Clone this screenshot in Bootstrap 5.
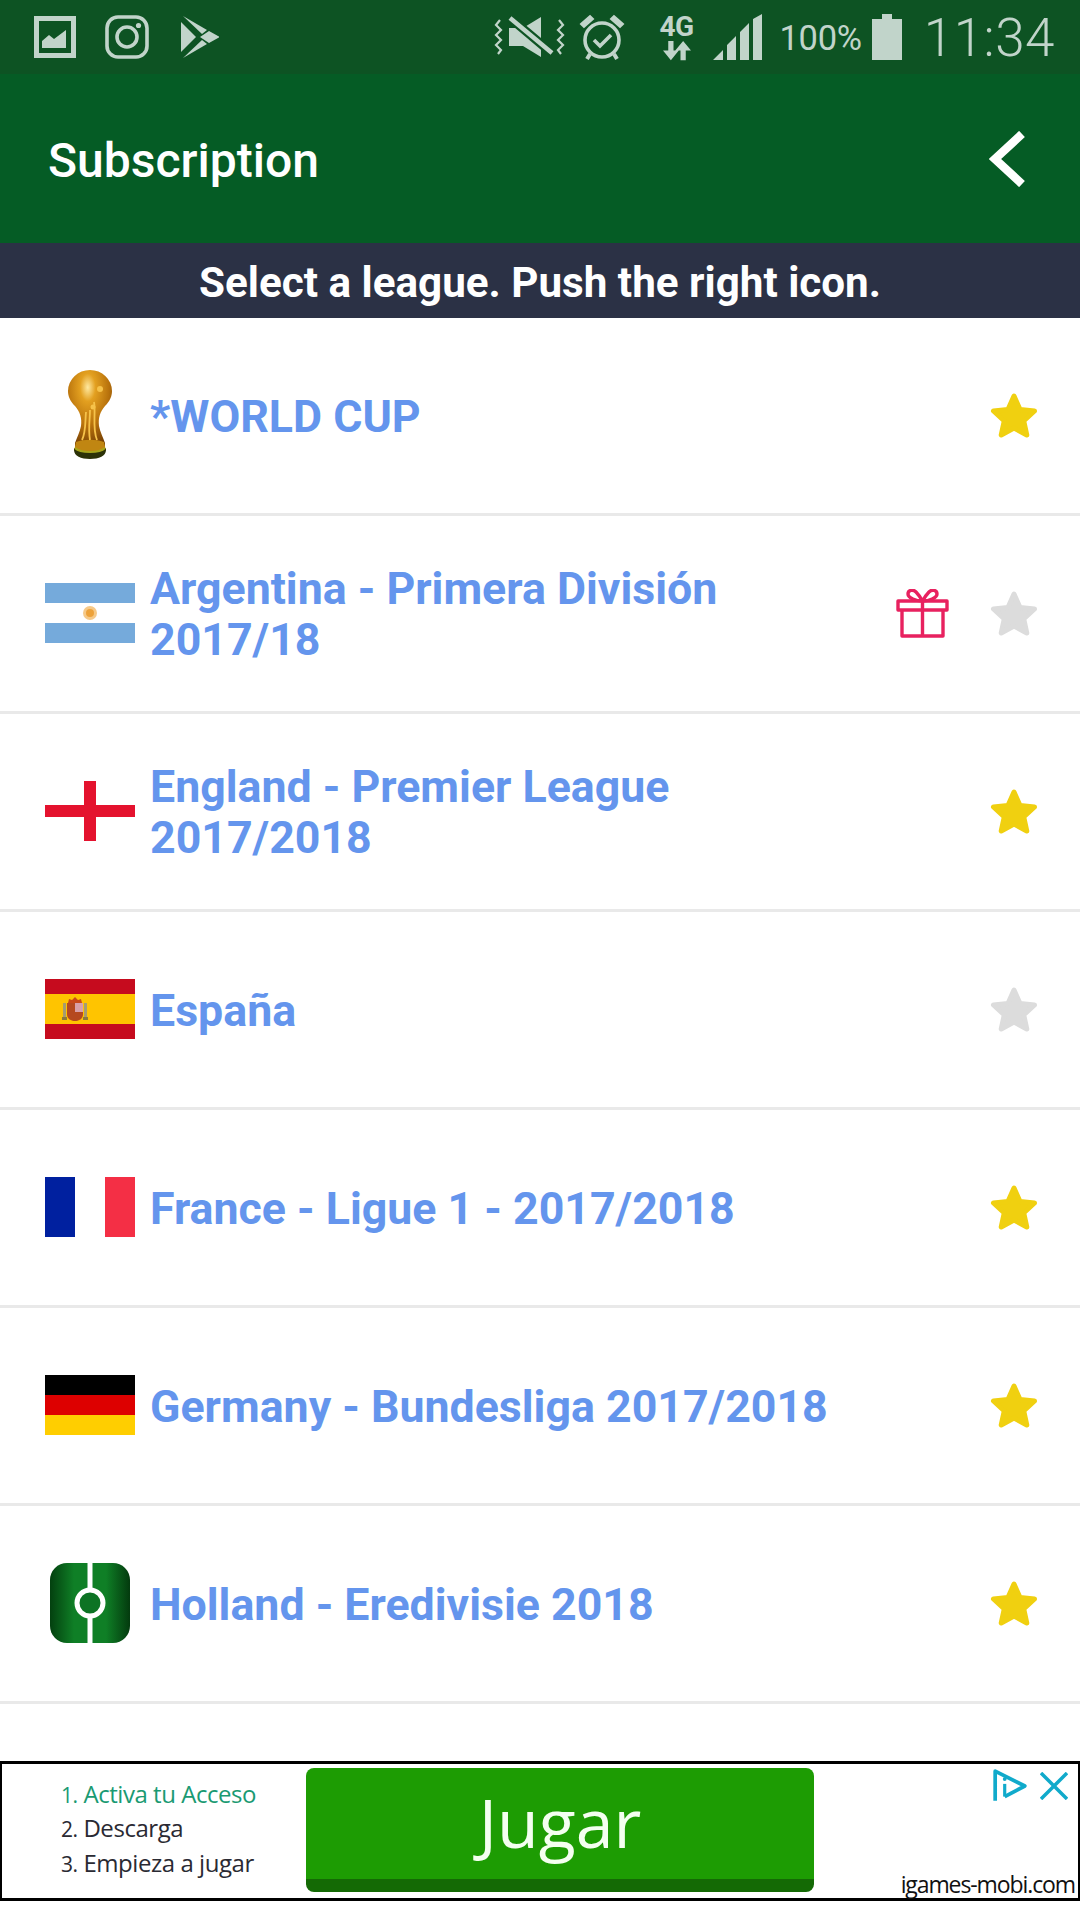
<!DOCTYPE html>
<html lang="en">
<head>
    <meta charset="UTF-8">
    <meta name="viewport" content="width=device-width, initial-scale=1.0">
    <title>Subscription</title>
    <link href="https://cdn.jsdelivr.net/npm/bootstrap@5.3.0/dist/css/bootstrap.min.css" rel="stylesheet">
    <style>
        body { font-family: Roboto, sans-serif; background: #fff; width: 1080px; height: 1920px; overflow: hidden; }
        svg { display: block; flex-shrink: 0; }

        .status-strip { height: 74px; background: #0d5323; color: #c1d4ca; padding-left: 34px; }
        .ic-insta { margin-left: 29px; }
        .ic-play { margin-left: 31px; }
        .ic-vibrate { margin-left: auto; }
        .ic-alarm { margin-left: 14px; }
        .ic-net { margin-left: 32px; width: 40px; }
        .net-label { font-family: "Liberation Sans Narrow", Roboto, sans-serif; font-size: 28px; font-weight: 700; line-height: 26px; letter-spacing: -.5px; }
        .ic-signal { margin-left: 16px; }
        .batt-pct { margin-left: 18px; font-size: 34.5px; font-weight: 400; line-height: 1; letter-spacing: -.3px; padding-top: 2px; }
        .ic-batt { margin-left: 10px; }
        .clock { margin-left: 22px; margin-right: 25px; font-size: 53px; font-weight: 300; line-height: 1; letter-spacing: .5px; padding-top: 3px; }

        .app-head { height: 169px; background: #055c25; padding: 0 54px 0 48px; }
        .app-title { font-size: 48px; font-weight: 500; color: #fff; margin: 4px 0 0; }

        .hint-bar { height: 75px; padding-top: 4px; background: #2b3145; color: #fff; font-size: 42.2px; font-weight: 700; }

        .list-group-flush .league-row.list-group-item { height: 198px; padding: 0 42px 0 45px; border-width: 0 0 3px; border-color: #e9e9e9; border-style: solid; }
        .flag-box { width: 90px; height: 60px; margin-bottom: 2px; }
        .league-name { margin-left: 15px; padding-top: 3px; font-size: 44.7px; line-height: 51px; font-weight: 700; color: #6495ed; }
        .ic-gift { margin-right: 41px; }

        .ad-box { margin-top: 57px; height: 140px; border: 3px solid #000; background: #fff; border-left-width: 2px; border-right-width: 2px; }
        .ad-steps { width: 304px; padding: 0 0 5px 59px; font-family: "Open Sans", sans-serif; font-size: 24px; font-weight: 500; letter-spacing: -.45px; color: #2a2a33; }
        .ad-step { height: 34.5px; line-height: 34.5px; }
        .ad-num { font-size: 21px; line-height: 1; }
        .ad-first { color: #1a9a72; }
        .ad-btn { width: 508px; height: 124px; margin-top: 4px; padding-bottom: 4px; background: #1d9c03; border-bottom: 13px solid #146a05; border-radius: 8px; color: #f4fff0; font-family: "Open Sans", sans-serif; font-size: 68px; line-height: 1; }
        .ad-side { padding: 4px 3px 0 0; }
        .ad-marks { gap: 12px; margin-right: 7px; }
        .ad-url { font-family: "Open Sans", sans-serif; font-size: 23px; line-height: 1; letter-spacing: -1.1px; color: #111; margin-bottom: 2px; white-space: nowrap; }
    </style>
</head>
<body>
    <div class="status-strip d-flex align-items-center">
        <svg width="42" height="42" viewBox="0 0 42 42"><rect x="2.5" y="2.5" width="37" height="37" fill="none" stroke="#c1d4ca" stroke-width="5"/><path d="M8 32V25l7-6 5 4 12-9v18z" fill="#c1d4ca"/></svg>
        <svg class="ic-insta" width="44" height="44" viewBox="0 0 44 44" fill="none" stroke="#c1d4ca" stroke-width="3.6"><rect x="2" y="2" width="40" height="40" rx="11"/><circle cx="22" cy="22" r="10"/><circle cx="33.5" cy="10.5" r="2.6" fill="#c1d4ca" stroke="none"/></svg>
        <svg class="ic-play" width="40" height="44" viewBox="0 0 40 44" fill="#c1d4ca"><path d="M1 7v30l15-15z"/><path d="M3 1l19 18 5-4z"/><path d="M3 43l19-18 5 4z"/><path d="M20 22l9-6 9 5a1 1 0 0 1 0 2l-9 5z"/></svg>

        <svg class="ic-vibrate" width="71" height="42" viewBox="0 0 71 42" fill="none" stroke="#c1d4ca"><path d="M6 4l-4 5 5 5-5 5 5 5-5 5 5 5-3 4M65 4l4 5-5 5 5 5-5 5 5 5-5 5 3 4" stroke-width="2.200"/><path d="M15 12h14L47 1v40L29 30H15z" fill="#c1d4ca" stroke="none"/><path d="M15 1l44 37" stroke="#0d5323" stroke-width="9"/><path d="M16 2l42 35" stroke-width="4.500"/></svg>
        <svg class="ic-alarm" width="46" height="47" viewBox="0 0 46 47" fill="none" stroke="#c1d4ca"><circle cx="23" cy="26" r="17" stroke-width="3.600"/><path d="M15 26l6 6 11-11" stroke-width="3.600"/><path d="M2 10l9-8 3 3-9 8zM44 10l-9-8-3 3 9 8z" fill="#c1d4ca" stroke-width="2"/><path d="M11 40l-3 5M35 40l3 5" stroke-width="4"/></svg>
        <div class="ic-net d-flex flex-column align-items-center">
            <span class="net-label">4G</span>
            <svg width="28" height="21" viewBox="0 0 32 22" fill="#c1d4ca"><path d="M6 0h6v11h6L9 22 0 11h6zM20 22h6V11h6L23 0l-9 11h6z"/></svg>
        </div>
        <svg class="ic-signal" width="49" height="46" viewBox="0 0 49 46" fill="#c1d4ca"><path d="M0 46l10-10v10zM14 46V31l9-9v24zM27 46V18l9-9v37zM40 46V5l9-5v46z"/></svg>
        <span class="batt-pct">100%</span>
        <svg class="ic-batt" width="30" height="46" viewBox="0 0 30 46" fill="#c1d4ca"><path d="M0 5h10V0h10v5h10v41H0z"/></svg>
        <span class="clock">11:34</span>
    </div>

    <div class="app-head d-flex align-items-center justify-content-between">
        <h1 class="app-title">Subscription</h1>
        <svg width="37" height="56" viewBox="0 0 37 56" fill="none" stroke="#fff" stroke-width="8.500"><path d="M33 3L6 28l27 25"/></svg>
    </div>

    <div class="hint-bar d-flex align-items-center justify-content-center">Select a league. Push the right icon.</div>

    <svg width="0" height="0" class="position-absolute">
        <defs>
            <symbol id="star" viewBox="0 0 48 48"><path d="M24 4l6 13.500 14.500 1.500-10.800 9.800 3.100 14.200L24 36l-12.800 7 3.100-14.200L3.500 19 18 17.500z" stroke-width="5" stroke-linejoin="round"/></symbol>
            <radialGradient id="gold" cx=".45" cy=".22" r=".8"><stop offset="0" stop-color="#ffe9a0"/><stop offset=".22" stop-color="#e3a020"/><stop offset=".6" stop-color="#b8720c"/><stop offset="1" stop-color="#6e3a04"/></radialGradient>
            <linearGradient id="pitch" x1="0" x2="1" y1="0" y2="0"><stop offset="0" stop-color="#03400f"/><stop offset=".3" stop-color="#0f7f26"/><stop offset=".7" stop-color="#0f7f26"/><stop offset="1" stop-color="#033a0e"/></linearGradient>
        </defs>
    </svg>

    <div class="list-group list-group-flush rounded-0">
        <div class="league-row list-group-item d-flex align-items-center">
            <div class="flag-box d-flex align-items-center justify-content-center">
                <svg width="48" height="90" viewBox="0 0 48 90"><path d="M9 36C4 31 2 26 2 21a22 21 0 0 1 44 0c0 5-2 10-7 15-5 6-7 12-6 20 1 6 4 11 6 17v6H9v-6c2-6 5-11 6-17 1-8-1-14-6-20z" fill="url(#gold)"/><path d="M10 72c8-3 20-3 28 0l2 9H8z" fill="#c08612"/><path d="M8 80c0 6 7 9 16 9s16-3 16-9v-2c-3 3-9 4-16 4S11 81 8 78z" fill="#2c3208"/><path d="M9 78c3 3 9 4 15 4s12-1 15-4" fill="none" stroke="#a7a51c" stroke-width="2"/><path d="M20 42c-1 10 0 20-4 28M28 32c2 12-2 26 3 38M24 40c0 10-2 18 0 30" fill="none" stroke="#f6c24a" stroke-width="1.800"/><circle cx="34" cy="19" r="3" fill="#f6c24a"/><circle cx="27" cy="37" r="2.500" fill="#f6c24a"/></svg>
            </div>
            <span class="league-name flex-grow-1">*WORLD CUP</span>
            <svg width="48" height="48" fill="#f0d010" stroke="#f0d010"><use href="#star"/></svg>
        </div>

        <div class="league-row list-group-item d-flex align-items-center">
            <svg class="flag-box" viewBox="0 0 90 60"><rect width="90" height="60" fill="#fff"/><rect width="90" height="20" fill="#75aadb"/><rect y="40" width="90" height="20" fill="#75aadb"/><circle cx="45" cy="30" r="7" fill="#f6c988"/><circle cx="45" cy="30" r="4" fill="#eda23a"/></svg>
            <span class="league-name flex-grow-1">Argentina - Primera División<br>2017/18</span>
            <svg class="ic-gift" width="53" height="49" viewBox="0 0 53 49" fill="none" stroke="#e8215f" stroke-width="3.400" stroke-linejoin="round"><path d="M6 21v26h41V21M2 12h49v9H2zM26.500 12v35"/><path d="M26.500 12C20 12 12 9 12 5s5-5 8-2 6.500 9 6.500 9zM26.500 12C33 12 41 9 41 5s-5-5-8-2-6.500 9-6.500 9z"/></svg>
            <svg width="48" height="48" fill="#dcdcdc" stroke="#dcdcdc"><use href="#star"/></svg>
        </div>

        <div class="league-row list-group-item d-flex align-items-center">
            <svg class="flag-box" viewBox="0 0 90 60"><rect width="90" height="60" fill="#fff"/><rect x="39" width="12" height="60" fill="#e4122e"/><rect y="24" width="90" height="12" fill="#e4122e"/></svg>
            <span class="league-name flex-grow-1">England - Premier League<br>2017/2018</span>
            <svg width="48" height="48" fill="#f0d010" stroke="#f0d010"><use href="#star"/></svg>
        </div>

        <div class="league-row list-group-item d-flex align-items-center">
            <svg class="flag-box" viewBox="0 0 90 60"><rect width="90" height="60" fill="#c60b1e"/><rect y="15" width="90" height="30" fill="#ffc400"/><path d="M22 24h16v11c0 5-4 7-8 7s-8-2-8-7z" fill="#b5491f"/><path d="M30 24h8v9h-8z" fill="#d8a0a8"/><path d="M23 24l1-4 3 1 3-3 3 3 3-1 1 4z" fill="#c8481a"/><rect x="18" y="24" width="3" height="16" fill="#a59c70"/><rect x="39" y="24" width="3" height="16" fill="#a59c70"/><rect x="17" y="38" width="5" height="3" fill="#8c7a3a"/><rect x="38" y="38" width="5" height="3" fill="#8c7a3a"/></svg>
            <span class="league-name flex-grow-1">España</span>
            <svg width="48" height="48" fill="#dcdcdc" stroke="#dcdcdc"><use href="#star"/></svg>
        </div>

        <div class="league-row list-group-item d-flex align-items-center">
            <svg class="flag-box" viewBox="0 0 90 60"><rect width="30" height="60" fill="#00209f"/><rect x="30" width="30" height="60" fill="#fff"/><rect x="60" width="30" height="60" fill="#f42f45"/></svg>
            <span class="league-name flex-grow-1">France - Ligue 1 - 2017/2018</span>
            <svg width="48" height="48" fill="#f0d010" stroke="#f0d010"><use href="#star"/></svg>
        </div>

        <div class="league-row list-group-item d-flex align-items-center">
            <svg class="flag-box" viewBox="0 0 90 60"><rect width="90" height="20" fill="#000"/><rect y="20" width="90" height="20" fill="#dd0000"/><rect y="40" width="90" height="20" fill="#ffce00"/></svg>
            <span class="league-name flex-grow-1">Germany - Bundesliga 2017/2018</span>
            <svg width="48" height="48" fill="#f0d010" stroke="#f0d010"><use href="#star"/></svg>
        </div>

        <div class="league-row list-group-item d-flex align-items-center">
            <div class="flag-box d-flex align-items-center justify-content-center">
                <svg width="80" height="80" viewBox="0 0 80 80"><rect width="80" height="80" rx="17" fill="url(#pitch)"/><path d="M40 0v80" stroke="#fff" stroke-width="5"/><circle cx="40" cy="40" r="13" fill="#0d7324" stroke="#fff" stroke-width="5"/></svg>
            </div>
            <span class="league-name flex-grow-1">Holland - Eredivisie 2018</span>
            <svg width="48" height="48" fill="#f0d010" stroke="#f0d010"><use href="#star"/></svg>
        </div>
    </div>

    <div class="ad-box d-flex">
        <div class="ad-steps d-flex flex-column justify-content-center">
            <div class="ad-step ad-first"><span class="ad-num">1.</span> Activa tu Acceso</div>
            <div class="ad-step"><span class="ad-num">2.</span> Descarga</div>
            <div class="ad-step"><span class="ad-num">3.</span> Empieza a jugar</div>
        </div>
        <div class="ad-btn d-flex align-items-center justify-content-center">Jugar</div>
        <div class="ad-side flex-grow-1 d-flex flex-column align-items-end justify-content-between">
            <div class="ad-marks d-flex align-items-center">
                <svg width="36" height="36" viewBox="0 0 34 34" fill="none" stroke="#10aacb" stroke-width="3.500" stroke-linejoin="round"><path d="M3 31V3l28 14-19 10"/><path d="M12 15v12" stroke-width="3"/><circle cx="12" cy="10.500" r="1.800" fill="#10aacb" stroke="none"/></svg>
                <svg width="28" height="28" viewBox="0 0 28 28" stroke="#10aacb" stroke-width="3.500"><path d="M1 1l26 26M27 1L1 27"/></svg>
            </div>
            <div class="ad-url">igames-mobi.com</div>
        </div>
    </div>
</body>
</html>
